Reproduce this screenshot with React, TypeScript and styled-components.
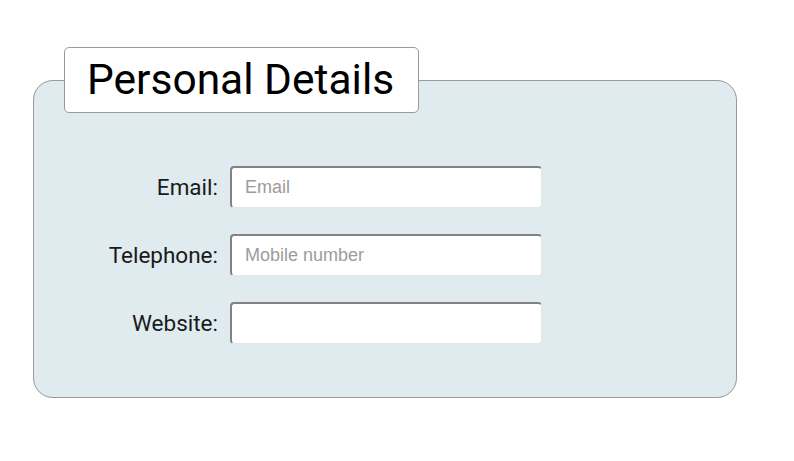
import React from "react";
import styled, { createGlobalStyle } from "styled-components";

const GlobalStyle = createGlobalStyle`
  html, body { margin: 0; padding: 0; background: #ffffff; }
  body { font-family: Roboto, "Noto Sans", sans-serif; }
`;

const Page = styled.div`
  padding: 47px 0 0 33px;
`;

const Panel = styled.fieldset`
  box-sizing: border-box;
  width: 704px;
  margin: 0;
  padding: 53px 0 53px 0;
  border: 1px solid #9a9a9a;
  border-radius: 20px;
  background: #dfebef;
  min-inline-size: 0;
`;

const Title = styled.legend`
  margin-left: 30px;
  padding: 8px 24px 8px 22px;
  background: #ffffff;
  border: 1px solid #9a9a9a;
  border-radius: 5px;
  font-family: Roboto, sans-serif;
  font-size: 42.5px;
  line-height: 48px;
  color: #000000;
`;

const Form = styled.div`
  display: grid;
  grid-template-columns: 184px 312px;
  column-gap: 12px;
  row-gap: 26px;
  align-items: center;
`;

const Label = styled.label`
  text-align: right;
  font-family: Roboto, sans-serif;
  font-size: 22.5px;
  color: #1a1a1a;
`;

const Field = styled.input`
  box-sizing: border-box;
  width: 312px;
  height: 42px;
  margin: 0;
  padding: 0 12px 0 13px;
  background: #ffffff;
  border-top: 2px solid #828282;
  border-left: 2px solid #828282;
  border-right: 1px solid #e6e6e6;
  border-bottom: 1px solid #e6e6e6;
  border-radius: 4px;
  font-family: "Liberation Sans", Arial, sans-serif;
  font-size: 18px;
  color: #222;
  outline: none;
  &::placeholder {
    color: #9c9c9c;
  }
`;

const fields = [
  { id: "email", label: "Email:", placeholder: "Email", type: "email" },
  { id: "tel", label: "Telephone:", placeholder: "Mobile number", type: "tel" },
  { id: "web", label: "Website:", placeholder: "", type: "url" },
];

export default function App() {
  return (
    <>
      <GlobalStyle />
      <Page>
        <Panel>
          <Title>Personal Details</Title>
          <Form>
            {fields.map((f) => (
              <React.Fragment key={f.id}>
                <Label htmlFor={f.id}>{f.label}</Label>
                <Field id={f.id} type={f.type} placeholder={f.placeholder} />
              </React.Fragment>
            ))}
          </Form>
        </Panel>
      </Page>
    </>
  );
}
